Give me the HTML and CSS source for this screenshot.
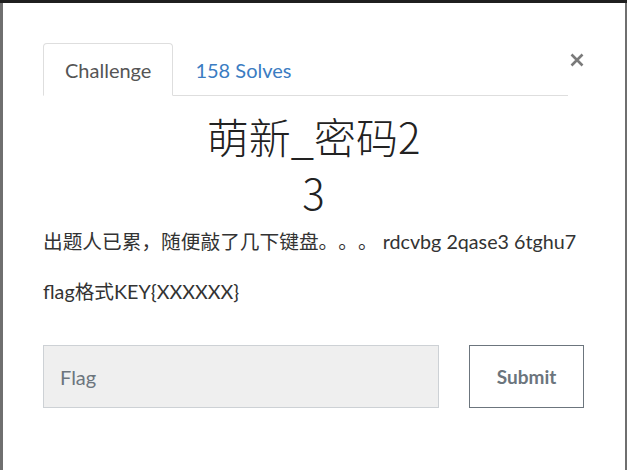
FILE: index.html
```html
<!DOCTYPE html>
<html lang="zh">
<head>
    <meta charset="UTF-8">
    <title>萌新_密码23</title>
    <link rel="stylesheet" href="styles.css">
</head>
<body>
    <div class="modal">
        <div class="modal-head">
            <ul class="tabs">
                <li class="tab active">Challenge</li>
                <li class="tab"><a href="#">158 Solves</a></li>
            </ul>
            <button class="close" aria-label="Close">
                <svg width="14" height="14" viewBox="0 0 14 14">
                    <path d="M1.5 1.5 L12.5 12.5 M12.5 1.5 L1.5 12.5" stroke="#7a7a7a" stroke-width="2.6" fill="none"/>
                </svg>
            </button>
        </div>
        <h3 class="title">萌新_密码2<br>3</h3>
        <div class="desc">
            <p>出题人已累，随便敲了几下键盘。。。 rdcvbg 2qase3 6tghu7</p>
            <p>flag格式KEY{XXXXXX}</p>
        </div>
        <form class="flag-row" onsubmit="return false">
            <input type="text" class="flag-input" placeholder="Flag">
            <button class="submit">Submit</button>
        </form>
    </div>
</body>
</html>
```

FILE: styles.css
```css
body {
    margin: 0;
    height: 470px;
    overflow: hidden;
    box-sizing: border-box;
    background: #6f6f6f;
    border-top: 3px solid #1f1f1f;
    padding: 0 2px 0 3px;
    font-family: Lato, "Noto Sans CJK SC", sans-serif;
}
.modal {
    box-sizing: border-box;
    background: #fff;
    height: 100%;
    padding: 40px 41px 0 40px;
}
.modal-head {
    display: flex;
    align-items: flex-start;
}
.tabs {
    flex: 1;
    display: flex;
    list-style: none;
    margin: 0;
    padding: 0;
    border-bottom: 1px solid #dedede;
}
.tab {
    height: 51px;
    line-height: 53px;
    padding: 0 21px;
    font-size: 20px;
    color: #555;
    border: 1px solid transparent;
    border-radius: 4px 4px 0 0;
    margin-bottom: -1px;
}
.tab.active {
    border-color: #dedede #dedede #fff;
    background: #fff;
}
.tab a {
    color: #3b7cc2;
    text-decoration: none;
}
.close {
    width: 16px;
    padding: 0 0 0 2px;
    margin-top: 10px;
    border: none;
    background: none;
    cursor: pointer;
}
.title {
    margin: 12px 0 0;
    text-align: center;
    font-family: "Noto Sans CJK SC", sans-serif;
    font-weight: 300;
    font-size: 42px;
    line-height: 56px;
    color: #222;
}
.desc {
    margin-top: 7px;
    font-size: 19.7px;
    line-height: 1.5;
    color: #333;
    white-space: nowrap;
    text-spacing-trim: space-all;
}
.desc p {
    margin: 0 0 20px;
}
.flag-row {
    display: flex;
    gap: 30px;
    margin-top: 39px;
}
.flag-input {
    width: 397px;
    height: 63px;
    box-sizing: border-box;
    padding: 0 16px;
    background: #efefef;
    border: 1px solid #cdd1d5;
    font-family: Lato, sans-serif;
    font-size: 20px;
}
.flag-input::placeholder {
    color: #6c757d;
}
.submit {
    width: 115px;
    height: 63px;
    background: #fff;
    border: 1px solid #6c757d;
    color: #6c757d;
    font-family: Lato, sans-serif;
    font-weight: bold;
    font-size: 19px;
}
```
